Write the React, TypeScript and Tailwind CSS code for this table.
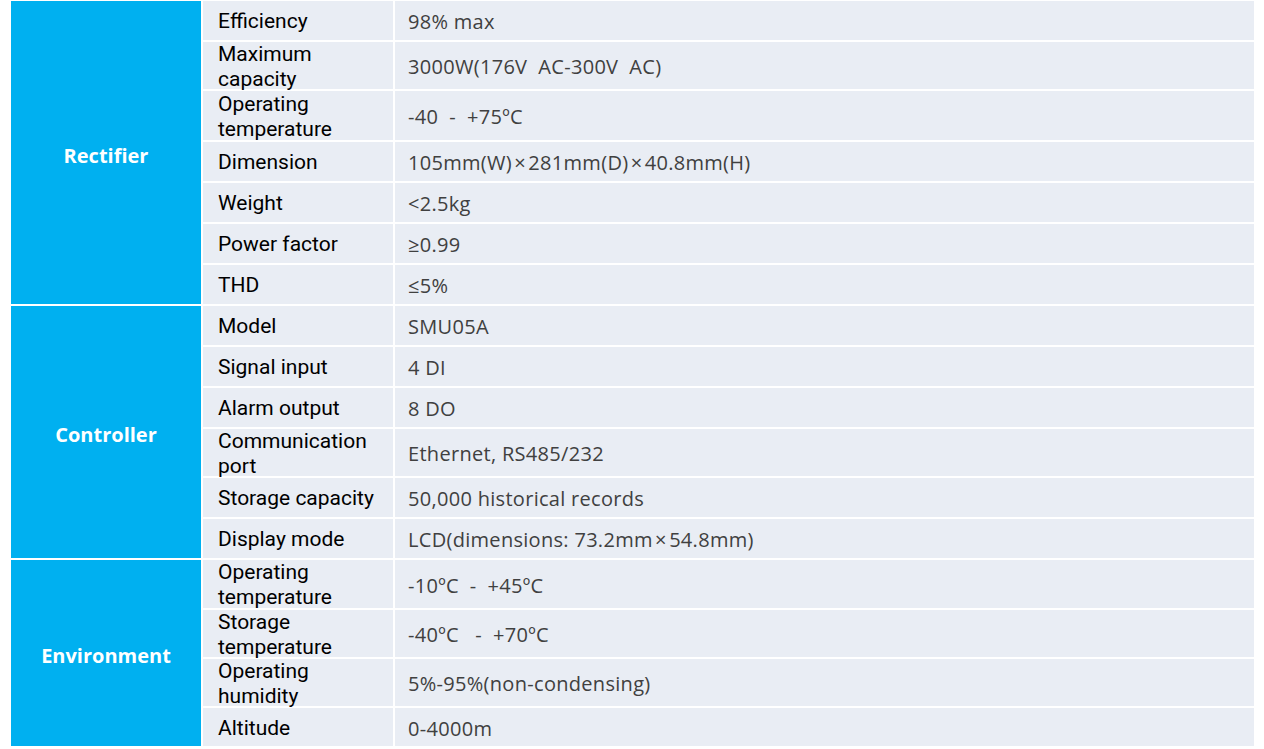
import React from "react";

interface SpecRow {
    label: string[];
    value: string;
    h: number;
}

interface SpecGroup {
    name: string;
    rows: SpecRow[];
}

const GROUPS: SpecGroup[] = [
    {
        name: "Rectifier",
        rows: [
            { label: ["Efficiency"], value: "98% max", h: 39 },
            { label: ["Maximum", "capacity"], value: "3000W(176V  AC-300V  AC)", h: 47 },
            { label: ["Operating", "temperature"], value: "-40  -  +75ºC", h: 49 },
            { label: ["Dimension"], value: "105mm(W)\u200A×\u200A281mm(D)\u200A×\u200A40.8mm(H)", h: 39 },
            { label: ["Weight"], value: "<2.5kg", h: 39 },
            { label: ["Power factor"], value: "≥0.99", h: 39 },
            { label: ["THD"], value: "≤5%", h: 39 },
        ],
    },
    {
        name: "Controller",
        rows: [
            { label: ["Model"], value: "SMU05A", h: 39 },
            { label: ["Signal input"], value: "4 DI", h: 39 },
            { label: ["Alarm output"], value: "8 DO", h: 39 },
            { label: ["Communication", "port"], value: "Ethernet, RS485/232", h: 47 },
            { label: ["Storage capacity"], value: "50,000 historical records", h: 39 },
            { label: ["Display mode"], value: "LCD(dimensions: 73.2mm\u200A×\u200A54.8mm)", h: 39 },
        ],
    },
    {
        name: "Environment",
        rows: [
            { label: ["Operating", "temperature"], value: "-10ºC  -  +45ºC", h: 48 },
            { label: ["Storage", "temperature"], value: "-40ºC   -  +70ºC", h: 47 },
            { label: ["Operating", "humidity"], value: "5%-95%(non-condensing)", h: 47 },
            { label: ["Altitude"], value: "0-4000m", h: 38 },
        ],
    },
];

export default function App() {
    return (
        <div className="w-[1264px] h-[749px] bg-white pl-[11px] pr-[10px] pt-px font-['Open_Sans','Noto_Sans',sans-serif]">
            <div className="flex flex-col gap-[2px]">
                {GROUPS.map((group) => (
                    <div key={group.name} className="flex gap-[2px]">
                        {/* group label */}
                        <div className="w-[190px] shrink-0 bg-[#00b0f0] flex items-center justify-center pt-[6px]">
                            <span className="text-white font-bold text-[20px]">{group.name}</span>
                        </div>

                        <div className="flex-1 flex flex-col gap-[2px]">
                            {group.rows.map((row, i) => (
                                <div key={i} className="flex gap-[2px]" style={{ height: row.h }}>
                                    <div className="w-[190px] shrink-0 bg-[#e9edf4] flex flex-col justify-center pl-[15px] pt-[2px] font-['Roboto',sans-serif] text-[21px] leading-[25px] text-black">
                                        {row.label.map((l) => (
                                            <span key={l}>{l}</span>
                                        ))}
                                    </div>
                                    <div className="flex-1 bg-[#e9edf4] flex items-center pl-[13px] pt-[3px] text-[20px] tracking-[0.3px] text-[#404040] whitespace-pre">
                                        {row.value}
                                    </div>
                                </div>
                            ))}
                        </div>
                    </div>
                ))}
            </div>
        </div>
    );
}
